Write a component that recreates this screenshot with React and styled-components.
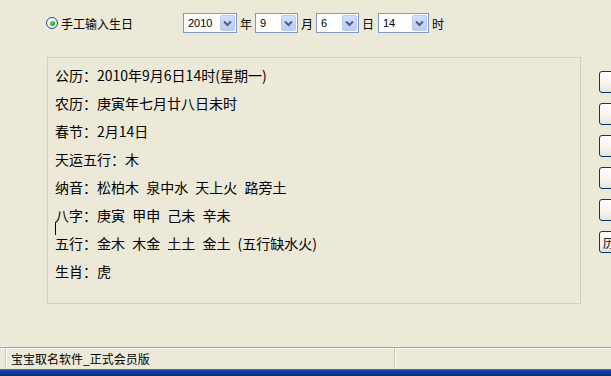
import React from "react";
import styled, { createGlobalStyle } from "styled-components";

const Global = createGlobalStyle`
  html, body { margin: 0; padding: 0; background: #ECE9D8; }
  body { overflow: hidden; }
`;

const Window = styled.div`
  width: 611px;
  height: 376px;
  background: #ECE9D8;
  display: flex;
  flex-direction: column;
  overflow: hidden;
  font-family: "Noto Sans CJK SC", "Liberation Sans", sans-serif;
  font-size: 12px;
  color: #000;
`;

const TopRow = styled.div`
  display: flex;
  align-items: center;
  height: 20px;
  margin-top: 13px;
  padding-left: 46px;
`;

const RadioLabel = styled.label`
  display: flex;
  align-items: center;
  width: 137px;
  gap: 3px;
  font-size: 12px;
`;

const RadioCircle = styled.span`
  width: 12px;
  height: 12px;
  border-radius: 50%;
  border: 1px solid #1C5180;
  background: radial-gradient(circle at 40% 40%, #fff 0%, #e8e7e0 100%);
  display: flex;
  align-items: center;
  justify-content: center;
  box-sizing: border-box;
  &::after {
    content: "";
    width: 5px;
    height: 5px;
    border-radius: 50%;
    background: radial-gradient(circle at 40% 40%, #5fdc5f 0%, #21a121 70%);
  }
`;

const Combo = styled.div`
  width: ${(p) => p.$w}px;
  height: 20px;
  flex: none;
  box-sizing: border-box;
  border: 1px solid #7F9DB9;
  background: #fff;
  display: flex;
  align-items: center;
  justify-content: space-between;
  padding: 1px;
  font-family: "Liberation Sans", sans-serif;
  font-size: 11px;
`;

const ComboValue = styled.span`
  padding-left: 3px;
`;

const DropButton = styled.span`
  width: 15px;
  height: 16px;
  box-sizing: border-box;
  border: 1px solid #B9CBF3;
  border-radius: 2px;
  background: linear-gradient(180deg, #D4E0FB 0%, #BACBF5 100%);
  display: flex;
  align-items: center;
  justify-content: center;
`;

const UnitLabel = styled.span`
  width: ${(p) => p.$w}px;
  flex: none;
  padding-left: 3px;
  box-sizing: border-box;
  font-size: 12px;
`;

const Main = styled.div`
  display: flex;
  margin-top: 24px;
`;

const InfoBox = styled.div`
  position: relative;
  flex: none;
  margin-left: 47px;
  width: 534px;
  height: 247px;
  box-sizing: border-box;
  border: 1px solid #D0D0BF;
  padding: 3px 0 0 7px;
`;

const Line = styled.div`
  line-height: 28px;
  height: 28px;
  white-space: pre;
  font-size: 14px;
  word-spacing: 4px;
`;

const Caret = styled.span`
  position: absolute;
  left: 7px;
  top: 164px;
  width: 1px;
  height: 13px;
  background: #000;
`;

const ButtonColumn = styled.div`
  display: flex;
  flex: none;
  flex-direction: column;
  gap: 10px;
  margin-left: 18px;
  padding-top: 14px;
`;

const SideButton = styled.button`
  width: 40px;
  height: 22px;
  box-sizing: border-box;
  border: 1px solid #003C74;
  border-radius: 3px;
  background: linear-gradient(180deg, #ffffff 0%, #f4f3ee 60%, #e3e2da 100%);
  padding: 0 0 0 3px;
  text-align: left;
  font-family: "Noto Sans CJK SC", sans-serif;
  font-size: 12px;
  color: #000;
`;

const Spacer = styled.div`
  flex: 1;
`;

const StatusBar = styled.div`
  display: flex;
  height: 21px;
  border-top: 1px solid #A8A595;
  box-shadow: inset 0 1px 0 #fff;
  background: #ECE9D8;
`;

const StatusPanel = styled.div`
  display: flex;
  align-items: center;
  width: ${(p) => (p.$w ? `${p.$w}px` : "auto")};
  flex: ${(p) => (p.$w ? "none" : "1")};
  margin-left: ${(p) => p.$ml || 0}px;
  padding-left: ${(p) => p.$pl || 0}px;
  box-sizing: border-box;
  border-left: 1px solid #C9C6B5;
  box-shadow: inset 1px 0 0 #fff;
  font-size: 12px;
  line-height: 1;
`;

const Taskbar = styled.div`
  height: 6px;
  border-top: 1px solid #3F74D6;
  background: linear-gradient(180deg, #1845A8 0%, #0C2A85 100%);
`;

const Chevron = () => (
  <svg width="9" height="7" viewBox="0 0 9 7">
    <path d="M1 1.5 L4.5 5 L8 1.5" fill="none" stroke="#4D6185" strokeWidth="2" />
  </svg>
);

const lines = [
  "公历：2010年9月6日14时(星期一)",
  "农历：庚寅年七月廿八日未时",
  "春节：2月14日",
  "天运五行：木",
  "纳音：松柏木 泉中水 天上火 路旁土",
  "八字：庚寅 甲申 己未 辛未",
  "五行：金木 木金 土土 金土 (五行缺水火)",
  "生肖：虎",
];

export default function App() {
  return (
    <>
      <Global />
      <Window>
        <TopRow>
          <RadioLabel>
            <RadioCircle />
            手工输入生日
          </RadioLabel>
          <Combo $w={54}>
            <ComboValue>2010</ComboValue>
            <DropButton><Chevron /></DropButton>
          </Combo>
          <UnitLabel $w={18}>年</UnitLabel>
          <Combo $w={43}>
            <ComboValue>9</ComboValue>
            <DropButton><Chevron /></DropButton>
          </Combo>
          <UnitLabel $w={18}>月</UnitLabel>
          <Combo $w={43}>
            <ComboValue>6</ComboValue>
            <DropButton><Chevron /></DropButton>
          </Combo>
          <UnitLabel $w={19}>日</UnitLabel>
          <Combo $w={51}>
            <ComboValue>14</ComboValue>
            <DropButton><Chevron /></DropButton>
          </Combo>
          <UnitLabel $w={18}>时</UnitLabel>
        </TopRow>
        <Main>
          <InfoBox>
            {lines.map((l) => (
              <Line key={l}>{l}</Line>
            ))}
            <Caret />
          </InfoBox>
          <ButtonColumn>
            <SideButton />
            <SideButton />
            <SideButton />
            <SideButton />
            <SideButton />
            <SideButton>历</SideButton>
          </ButtonColumn>
        </Main>
        <Spacer />
        <StatusBar>
          <StatusPanel $w={389} $ml={5} $pl={5}>宝宝取名软件_正式会员版</StatusPanel>
          <StatusPanel />
        </StatusBar>
        <Taskbar />
      </Window>
    </>
  );
}
